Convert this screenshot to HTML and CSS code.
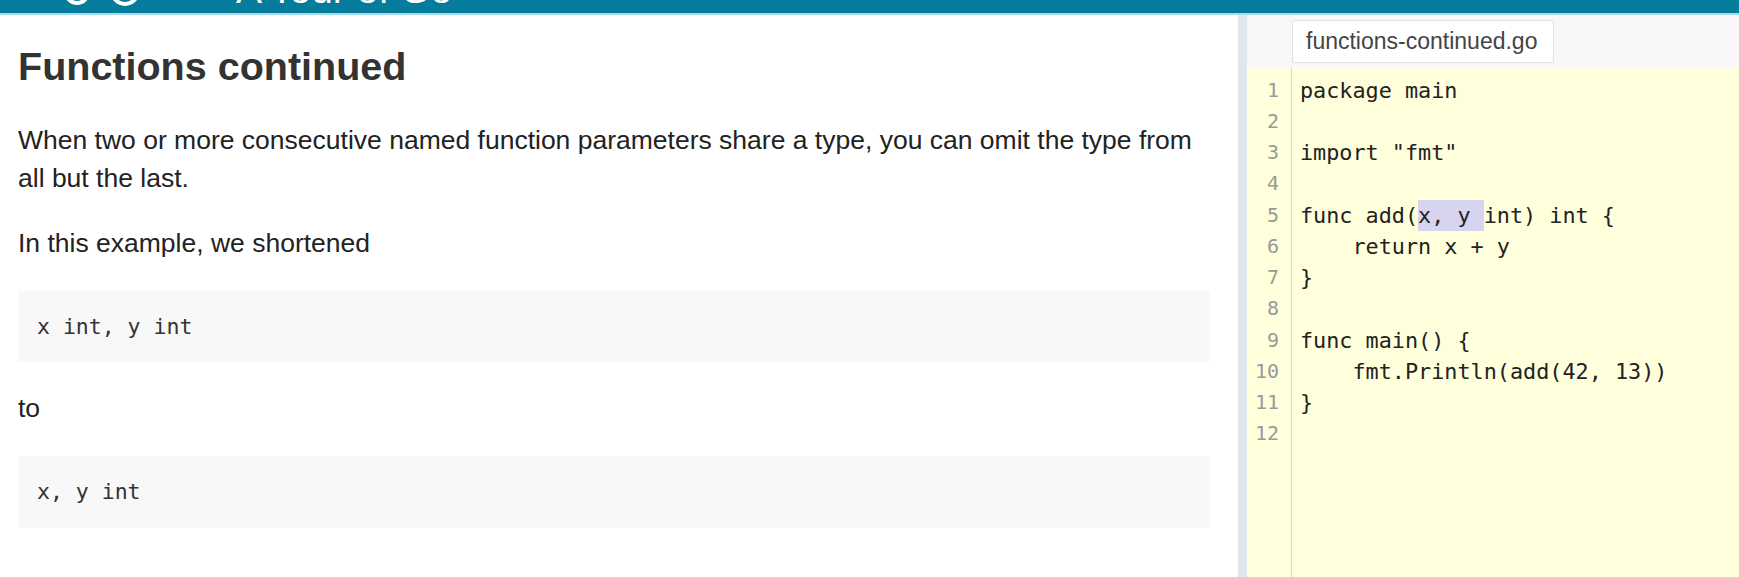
FILE: index.html
```html
<!DOCTYPE html>
<html lang="en">
<head>
<meta charset="utf-8">
<title>A Tour of Go</title>
<link rel="stylesheet" href="styles.css">
</head>
<body>
<header class="topbar">
  <svg class="logo" width="90" height="13" viewBox="0 0 90 13" aria-hidden="true">
    <circle cx="17" cy="-8" r="11" fill="none" stroke="#fff" stroke-width="4"/>
    <circle cx="65" cy="-9" r="13" fill="none" stroke="#fff" stroke-width="4"/>
  </svg>
  <span class="brand">A Tour of Go</span>
</header>
<main class="layout">
  <section class="lesson">
    <h1 class="lesson-title">Functions continued</h1>
    <p class="lesson-text first">When two or more consecutive named function parameters share a type, you can omit the type from all but the last.</p>
    <p class="lesson-text">In this example, we shortened</p>
    <pre class="snippet">x int, y int</pre>
    <p class="lesson-text">to</p>
    <pre class="snippet last">x, y int</pre>
  </section>
  <div class="splitter"></div>
  <section class="editor-pane">
    <div class="tabs">
      <div class="tab">functions-continued.go</div>
    </div>
    <div class="editor">
      <div class="gutter">
        <div>1</div><div>2</div><div>3</div><div>4</div><div>5</div><div>6</div>
        <div>7</div><div>8</div><div>9</div><div>10</div><div>11</div><div>12</div>
      </div>
<pre class="code"><span class="ln">package main</span>
<span class="ln"> </span>
<span class="ln">import "fmt"</span>
<span class="ln"> </span>
<span class="ln">func add(<span class="sel">x, y </span>int) int {</span>
<span class="ln">    return x + y</span>
<span class="ln">}</span>
<span class="ln"> </span>
<span class="ln">func main() {</span>
<span class="ln">    fmt.Println(add(42, 13))</span>
<span class="ln">}</span>
<span class="ln"> </span></pre>
    </div>
  </section>
</main>
</body>
</html>
```

FILE: styles.css
```css
html, body {
  margin: 0;
  padding: 0;
  height: 100%;
  overflow: hidden;
  background: #fff;
  font-family: "Liberation Sans", Arial, sans-serif;
}

.topbar {
  height: 13px;
  background: #067c9c;
  border-bottom: 2px solid #a9dbea;
  overflow: hidden;
  display: flex;
  align-items: flex-end;
  padding-left: 60px;
}

.logo {
  display: block;
  flex: none;
}

.brand {
  color: #fff;
  font-size: 39px;
  line-height: 1;
  margin-left: 86px;
  margin-bottom: 4px;
  white-space: nowrap;
}

.layout {
  display: flex;
  height: calc(100% - 15px);
}

.lesson {
  flex: 0 0 1238px;
  box-sizing: border-box;
  padding: 0 28px 0 18px;
  color: #222;
}

.lesson-title {
  margin: 28px 0 0;
  font-size: 39.5px;
  line-height: 47px;
  font-weight: 700;
  color: #333;
}

.lesson-text {
  margin: 26px 0 0;
  font-size: 26.5px;
  line-height: 38.4px;
}

.lesson-text.first {
  margin-top: 31px;
}

.snippet {
  margin: 29px 0 27px;
  background: #f8f8f8;
  padding: 0 19px;
  height: 71px;
  display: flex;
  align-items: center;
  font-family: "DejaVu Sans Mono", monospace;
  font-size: 21.5px;
  color: #333;
}

.snippet.last {
  margin-top: 28px;
  height: 72px;
}

.snippet + .lesson-text {
  margin-top: 0;
}

.splitter {
  flex: 0 0 9px;
  background: #dfe6ee;
}

.editor-pane {
  flex: 1;
  display: flex;
  flex-direction: column;
  background: #f8f8fa;
  min-width: 0;
}

.tabs {
  height: 52px;
  flex: none;
  padding: 5px 0 0 45px;
  box-sizing: border-box;
}

.tab {
  width: 262px;
  height: 43px;
  box-sizing: border-box;
  background: #fff;
  border: 1px solid #e2e2e2;
  border-radius: 2px;
  padding-left: 13px;
  display: flex;
  align-items: center;
  font-size: 23px;
  color: #444;
}

.editor {
  flex: 1;
  display: flex;
  background: #ffffdc;
  font-family: "DejaVu Sans Mono", monospace;
}

.gutter {
  flex: 0 0 45px;
  box-sizing: border-box;
  border-right: 1px solid #dcdcc8;
  padding: 7.5px 12px 0 0;
  text-align: right;
  color: #999;
  font-size: 20px;
  line-height: 31.25px;
}

.code {
  margin: 0;
  padding: 7.5px 0 0 8px;
  font-family: inherit;
  font-size: 21.8px;
  line-height: 31.25px;
  color: #222;
}

.ln {
  display: inline-block;
  height: 31.25px;
  vertical-align: top;
}

.sel {
  background: #d7d4f0;
  display: inline-block;
  height: 31.25px;
}
```
